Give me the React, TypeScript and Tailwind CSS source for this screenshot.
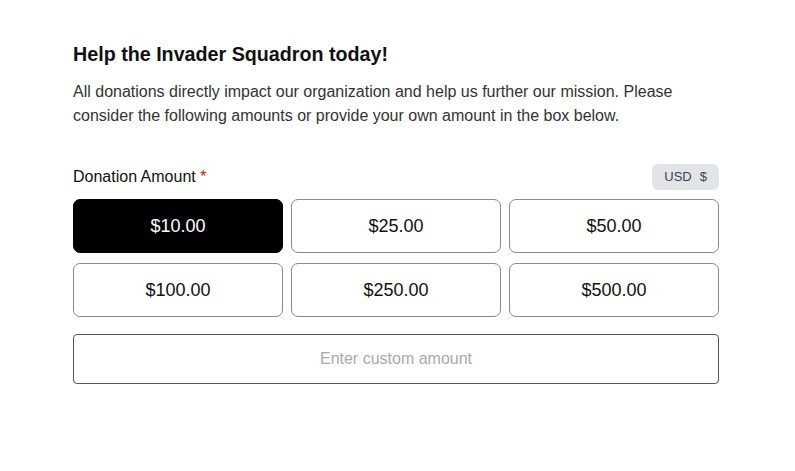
import { useState } from 'react'

const amounts = ['$10.00', '$25.00', '$50.00', '$100.00', '$250.00', '$500.00']

export default function App() {
  const [selected, setSelected] = useState(0)
  const [custom, setCustom] = useState('')

  return (
    <div className="min-h-screen bg-white font-['Liberation_Sans',Arial,sans-serif]">
      <div className="w-[646px] ml-[73px] pt-[42px]">
        <h1 className="text-[19.7px] leading-[24px] font-bold text-[#111]">Help the Invader Squadron today!</h1>
        <p className="mt-[14px] text-[16px] leading-[24px] text-[#333]">
          All donations directly impact our organization and help us further our mission. Please consider the following amounts or provide your own amount in the box below.
        </p>

        <div className="mt-[36px] flex items-center justify-between">
          <span className="text-[16px] text-[#111]">
            Donation Amount <span className="text-[#d20f0f]">*</span>
          </span>
          <span className="flex items-center gap-2 h-[26px] px-3 rounded-md bg-[#e3e4e6] text-[13px] text-[#3b4450]">
            USD <span>$</span>
          </span>
        </div>

        <div className="mt-[9px] grid grid-cols-3 gap-x-[8px] gap-y-[10px]">
          {amounts.map((a, i) => (
            <button
              key={a}
              onClick={() => setSelected(i)}
              className={`h-[54px] rounded-[7px] text-[18px] ${
                selected === i ? 'bg-black text-white border border-black' : 'bg-white text-[#111] border border-[#8a8a8a]'
              }`}
            >
              {a}
            </button>
          ))}
        </div>

        <input
          value={custom}
          onChange={e => setCustom(e.target.value)}
          placeholder="Enter custom amount"
          className="mt-[17px] w-full h-[50px] rounded-[4px] border border-[#555] text-center text-[16px] placeholder:text-[#aaa] focus:outline-none"
        />
      </div>
    </div>
  )
}
